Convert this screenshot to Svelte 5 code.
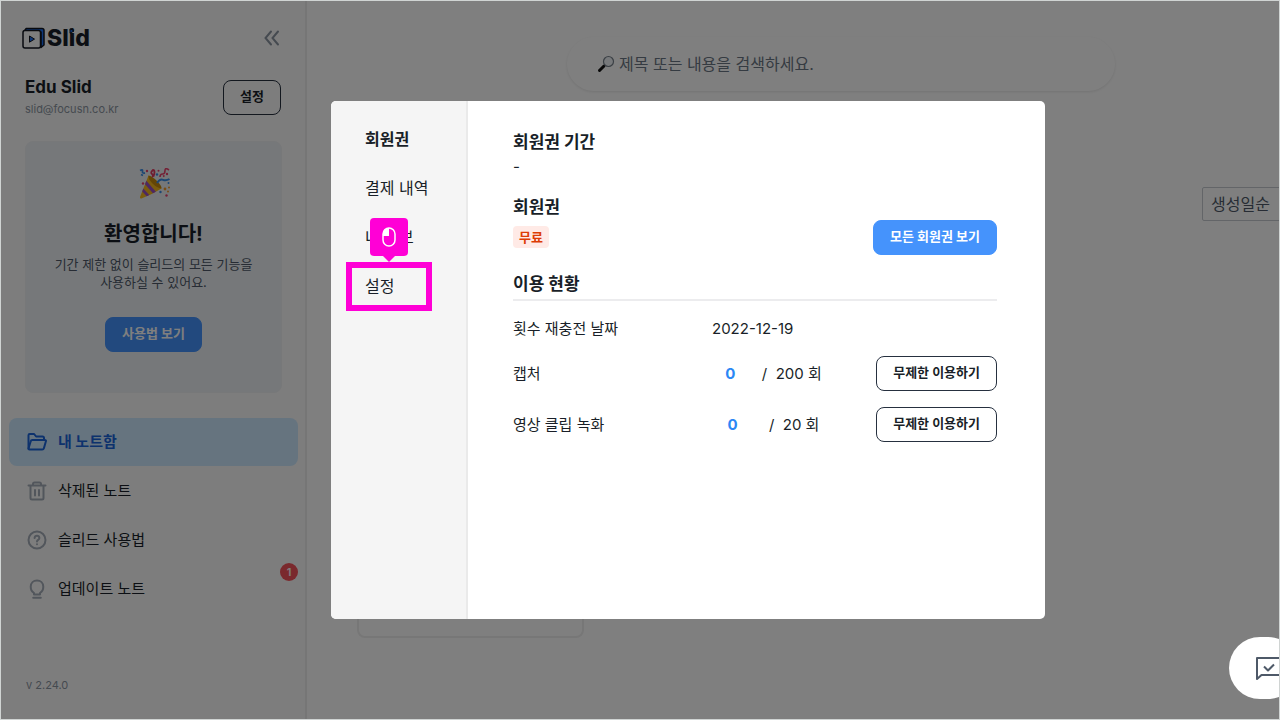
<script>
  let { user = { name: 'Edu Slid', email: 'slid@focusn.co.kr' } } = $props();

  const menu = [
    { icon: 'folder', label: '내 노트함' },
    { icon: 'trash', label: '삭제된 노트' },
    { icon: 'help', label: '슬리드 사용법' },
    { icon: 'bulb', label: '업데이트 노트', badge: 1 },
  ];
  const tabs = ['회원권', '결제 내역', '내 정보', '설정'];
  const usage = [
    { label: '캡처', used: 0, limit: 200 },
    { label: '영상 클립 녹화', used: 0, limit: 20 },
  ];

  let activeMenu = $state('내 노트함');
  let activeTab = $state('회원권');
  let keyword = $state('');
</script>

{#snippet icon(name)}
  <svg class="icon" viewBox="0 0 20 20" width="20" height="20" aria-hidden="true">
    {#if name === 'folder'}
      <path d="M1.5 16.500V3.200q0-1.200 1.200-1.200h4.400l2 2.500h6.400q1.500 0 1.500 1.500v2" />
      <path d="M5.300 8h12.500q1.500 0 1.100 1.300l-2 6.900q-.4 1.300-1.700 1.300H2.500q-1.300 0-.9-1.300l2.100-7q.3-1.200 1.600-1.200z" />
    {:else if name === 'trash'}
      <path d="M1.500 4.500h17M6 4.500V3q0-1.500 1.500-1.500h5Q14 1.500 14 3v1.500M3.500 4.500V17q0 1.500 1.500 1.500h10q1.500 0 1.500-1.500V4.500M8 9v5.500M12 9v5.500" />
    {:else if name === 'help'}
      <circle cx="10" cy="10" r="8.500" />
      <path d="M7.600 8q.2-2.200 2.400-2.200T12.400 8q0 1.200-1.300 2-1.100.6-1.100 1.500" />
      <circle class="dot" cx="10" cy="14.200" r="1" />
    {:else if name === 'bulb'}
      <path d="M7 15.500V14Q3.700 12 3.700 7.800C3.700 4 6.500 1.500 10 1.500s6.300 2.500 6.300 6.300q0 4.200-3.300 6.200v1.500zM6.200 18.800h7.600" />
    {/if}
  </svg>
{/snippet}

<div class="app">
  <aside class="sidebar">
    <div class="brand">
      <a class="logo" href="/" aria-label="Slid">
        <svg viewBox="0 0 24 22" width="24" height="22" aria-hidden="true">
          <path d="M2 4.500 4.200 1.500H20q2 0 2 2V18l-3 2.500V5z" fill="#1b6ff2" stroke="#10151f" stroke-width="1.500" stroke-linejoin="round" />
          <rect x="1" y="3.500" width="17.500" height="17.500" rx="2" fill="#fbfbfb" stroke="#10151f" stroke-width="1.500" />
          <path d="M7.500 9v6.200l5-3.100z" fill="#1b6ff2" stroke="#10151f" stroke-linejoin="round" />
        </svg>
        <span class="wordmark">
          Slid
          <svg viewBox="0 0 6 6" width="6" height="6" aria-hidden="true"><path d="M1 .8v4.400L5 3z" fill="#1b6ff2" stroke="#10151f" /></svg>
        </span>
      </a>
      <button type="button" class="collapse" aria-label="사이드바 접기">
        <svg viewBox="0 0 16 16" width="16" height="16" aria-hidden="true"><path d="M7 1.500 1.500 8 7 14.500M14 1.500 8.500 8l5.500 6.500" /></svg>
      </button>
    </div>

    <div class="profile">
      <div>
        <p class="name">{user.name}</p>
        <p class="email">{user.email}</p>
      </div>
      <button type="button" class="btn outline">설정</button>
    </div>

    <section class="welcome">
      <svg class="popper" viewBox="0 0 32 32" width="32" height="32" aria-hidden="true">
        <path d="M10.500 7.500 23.500 20.500Q14 26.500 3.500 30.500q-2 .2-1.500-1.500z" fill="#f6b91d" />
        <path d="M10.500 7.500Q14 8 19 13t4.500 7.500Q19 20 14.500 15.500T10.500 7.500z" fill="#c98a0c" />
        <path d="m8.300 12.800 9.600 11-3 1.500L7 16.200zM5.300 20.500l6 6.500-2.600 1.200-4.500-4.800z" fill="#9a51c4" />
        <path d="M19 15q3-4.500 6-3.200t6.500-.8" fill="none" stroke="#3b8ee6" stroke-width="2" />
        <path d="M14 9q2-1.500 0-3t1-4q1.500 0 1.500 2t-1 4.500" fill="none" stroke="#e03a60" stroke-width="1.800" />
        <path d="M2 2.500q3-1.500 2.500.8T7 5M3 6.500l2 1" fill="none" stroke="#3b8ee6" stroke-width="1.800" />
        <path d="M22 9q0-3 2.500-3T27 2.500t4-.5M25 8.500l1.500-1" fill="none" stroke="#e8436d" stroke-width="1.600" />
        <g fill="#e8436d"><circle cx="5" cy="15.500" r="1.200" /><circle cx="9" cy="3" r="1.200" /><circle cx="29" cy="6" r="1.200" /><circle cx="28.500" cy="27.500" r="1.200" /><circle cx="20.500" cy="2.800" r="1" /></g>
        <g fill="#f39a2d"><circle cx="27" cy="21" r="1.400" /><circle cx="31" cy="19.500" r="1" /><circle cx="30" cy="23.500" r="1" /></g>
        <g fill="#3b8ee6"><circle cx="22.500" cy="24" r="1.200" /><circle cx="19" cy="6.500" r="1.200" /><circle cx="30.500" cy="15" r="1" /></g>
      </svg>
      <h2>환영합니다!</h2>
      <p>기간 제한 없이 슬리드의 모든 기능을<br />사용하실 수 있어요.</p>
      <button type="button" class="btn primary">사용법 보기</button>
    </section>

    <nav class="menu">
      {#each menu as item}
        <a href="#menu" class:active={activeMenu === item.label} onclick={() => (activeMenu = item.label)}>
          {@render icon(item.icon)}
          {item.label}
          {#if item.badge}<span class="count">{item.badge}</span>{/if}
        </a>
      {/each}
    </nav>

    <p class="version">v 2.24.0</p>
  </aside>

  <main>
    <label class="search">
      <svg viewBox="0 0 18 18" width="18" height="18" aria-hidden="true">
        <path d="m2.500 15.500 4.500-4.500" stroke="#111" stroke-width="3" stroke-linecap="round" />
        <circle cx="11.500" cy="6.500" r="5" fill="#eef3f7" stroke="#77818b" stroke-width="1.200" />
      </svg>
      <input type="text" placeholder="제목 또는 내용을 검색하세요." aria-label="노트 검색" bind:value={keyword} />
    </label>
    <select class="sort" aria-label="정렬">
      <option>생성일순</option>
    </select>
    <div class="notes">
      <article class="note"></article>
    </div>
  </main>

  <div class="overlay">
    <div class="modal" role="dialog" aria-modal="true" aria-label="회원권">
      <nav class="tabs">
        {#each tabs as tab}
          <div class="tab">
            <button type="button" class:active={activeTab === tab} onclick={() => (activeTab = tab)}>{tab}</button>
            {#if tab === '설정'}
              <!-- guide marker: click here -->
              <div class="guide">
                <div class="pointer">
                  <svg viewBox="0 0 14 20" width="14" height="20" aria-hidden="true">
                    <rect x="1" y="1" width="12" height="18" rx="6" fill="none" stroke="#fff" stroke-width="1.500" />
                    <path d="M7 1v8H1V7q0-6 6-6z" fill="#fff" />
                  </svg>
                </div>
              </div>
            {/if}
          </div>
        {/each}
      </nav>

      <div class="content">
        <h3>회원권 기간</h3>
        <p class="period">-</p>
        <div class="plan">
          <div>
            <h3>회원권</h3>
            <span class="free">무료</span>
          </div>
          <button type="button" class="btn primary">모든 회원권 보기</button>
        </div>
        <h3 class="usage-title">이용 현황</h3>
        <table>
          <tbody>
            <tr class="date">
              <th scope="row">횟수 재충전 날짜</th>
              <td>2022-12-19</td>
              <td></td>
            </tr>
            {#each usage as row}
              <tr>
                <th scope="row">{row.label}</th>
                <td>
                  <div class="quota"><strong>{row.used}</strong><span>/&nbsp;&nbsp;{row.limit} 회</span></div>
                </td>
                <td class="action"><button type="button" class="btn outline">무제한 이용하기</button></td>
              </tr>
            {/each}
          </tbody>
        </table>
      </div>
    </div>
  </div>

  <button type="button" class="chat" aria-label="문의하기">
    <svg viewBox="0 0 30 26" width="30" height="26" aria-hidden="true">
      <path d="M2 24V3h26v17H6.500zM9 11.500l4 4 6-6" />
    </svg>
  </button>
</div>

<style>
  :global(body) { margin: 0; }
  .app {
    position: relative; box-sizing: border-box; min-height: 100vh; overflow: hidden;
    display: grid; grid-template-columns: 306px 1fr; border: 1px solid #d0d4d3;
    background: #fff; color: #191f28;
    font-family: Inter, "Noto Sans CJK KR", sans-serif; font-size: 15px; line-height: 24px;
  }
  .app * { box-sizing: border-box; }
  h2, h3, p { margin: 0; }
  button, input, select { font: inherit; color: inherit; }
  a { color: inherit; text-decoration: none; }
  svg { display: block; flex: none; }

  .btn {
    height: 35px; padding: 0 16px 3px; border: 1px solid #26303f; border-radius: 8px;
    background: transparent; font-size: 13px; font-weight: 700; line-height: 20px; white-space: nowrap; cursor: pointer;
  }
  .btn.primary { background: #4593fc; border-color: #4593fc; color: #fff; }

  .sidebar {
    display: flex; flex-direction: column; padding: 25px 7px 20px 8px;
    background: #fbfbfb; border-right: 2px solid #ededed;
  }
  .brand { display: flex; justify-content: space-between; align-items: center; padding: 0 18px 0 13px; }
  .logo { display: flex; align-items: center; gap: 1px; font-size: 23px; font-weight: 800; }
  .wordmark { position: relative; }
  .wordmark svg { position: absolute; top: 2px; left: 22px; }
  .collapse { padding: 0; border: 0; background: none; }
  .collapse path { fill: none; stroke: #8b95a1; stroke-width: 2; stroke-linecap: round; }

  .profile { display: flex; justify-content: space-between; align-items: center; margin-top: 25px; padding: 0 17px 0 16px; }
  .name { font-size: 17px; font-weight: 700; line-height: 24px; }
  .email { font-size: 11px; line-height: 20px; color: #8b95a1; }

  .welcome {
    display: flex; flex-direction: column; align-items: center; margin: 22px 16px 0;
    padding: 26px 16px 40px; border: 1px solid #eef0f3; border-radius: 8px; background: #edf1f5; text-align: center;
  }
  .welcome h2 { margin-top: 18px; font-size: 20px; font-weight: 700; line-height: 32px; }
  .welcome p { margin-top: 5px; font-size: 13px; line-height: 18px; color: #4e5968; }
  .welcome .btn { margin-top: 26px; }

  .menu { display: flex; flex-direction: column; gap: 1px; margin-top: 25px; }
  .menu a { position: relative; display: flex; align-items: center; gap: 11px; height: 48px; padding: 0 18px; border-radius: 8px; }
  .icon { fill: none; stroke: #a4adb8; stroke-width: 2; stroke-linejoin: round; stroke-linecap: round; }
  .icon .dot { fill: #a4adb8; stroke: none; }
  .menu a.active { background: #cce9ff; color: #1b64da; font-weight: 700; }
  .menu a.active .icon { stroke: #1b64da; }
  .count {
    position: absolute; top: -2px; right: 0; width: 18px; height: 18px; border-radius: 50%;
    background: #f5525a; color: #fff; font-size: 11px; font-weight: 600; line-height: 18px; text-align: center;
  }
  .version { margin-top: auto; padding-left: 17px; font-size: 11px; line-height: 28px; color: #8b95a1; }

  main { display: flex; flex-direction: column; min-width: 1068px; padding: 36px 50px 81px; }
  .search {
    display: flex; align-items: center; align-self: center; gap: 4px; width: 548px; height: 54px; padding: 0 30px;
    border-radius: 27px; box-shadow: 0 1px 3px rgba(0, 0, 0, 0.1); font-size: 16px;
  }
  .search input { flex: 1; padding: 0; border: 0; outline: 0; background: none; }
  .search input::placeholder { color: #6b7684; opacity: 1; }
  .sort {
    appearance: none; align-self: flex-end; width: 123px; height: 34px; margin-top: 96px; padding: 0 8px;
    border: 1px solid #c6cbd1; border-radius: 2px; background: #fff; color: #4e5968; font-size: 16px;
  }
  .notes { flex: 1; display: grid; grid-template-columns: repeat(4, 1fr); gap: 20px; margin-top: 32px; }
  .note { border: 2px solid #eee; border-radius: 8px; }

  .overlay {
    position: absolute; inset: 0; display: grid; place-items: center;
    padding-left: 96px; background: rgba(0, 0, 0, 0.5);
  }
  .modal {
    display: grid; grid-template-columns: 137px 1fr; width: min(714px, 90%); min-height: 518px;
    border-radius: 5px; overflow: hidden; background: #fff;
  }
  .tabs { padding: 14px 15px; background: #f5f5f5; border-right: 2px solid #eaeaea; }
  .tab { position: relative; width: 86px; height: 49px; }
  .tab button { height: 100%; padding: 0 0 2px 19px; border: 0; background: none; font-size: 16px; white-space: nowrap; }
  .tab button.active { font-weight: 700; }
  .guide { position: absolute; inset: 0; border: 6px solid #ff00d6; pointer-events: none; }
  .pointer {
    position: absolute; left: 18px; bottom: 49px; display: grid; place-items: center;
    width: 38px; height: 38px; border-radius: 4px; background: #ff00d6;
  }
  .pointer::after {
    content: ''; position: absolute; top: 100%; left: 13px;
    border: 6px solid transparent; border-top-color: #ff00d6; border-bottom: 0;
  }

  .content { padding: 28px 48px 32px 45px; }
  h3 { font-size: 17px; font-weight: 700; line-height: 26px; }
  .plan { display: flex; justify-content: space-between; align-items: flex-end; height: 61px; margin-top: 15px; }
  .plan > div { height: 100%; }
  .free {
    display: block; width: 36px; margin-top: 6px; border-radius: 4px; background: #ffeae6;
    color: #dd3c04; font-size: 13px; font-weight: 700; line-height: 22px; text-align: center;
  }
  .usage-title { margin-top: 16px; padding-bottom: 2px; border-bottom: 2px solid #ececee; }
  table { width: 100%; border-collapse: collapse; table-layout: fixed; }
  th, td { height: 51px; padding: 0; text-align: left; font-weight: 400; }
  th { width: 199px; }
  td:nth-child(2) { width: 123px; }
  .date th, .date td { height: 47px; padding-top: 9px; }
  .quota { display: flex; justify-content: space-around; }
  .quota strong { color: #2b87f5; font-weight: 700; }
  .action { text-align: right; }

  .chat {
    position: absolute; right: -20px; bottom: 20px; display: flex; align-items: center;
    width: 70px; height: 62px; padding: 0 26px; border: 0; border-radius: 31px; background: #fff;
  }
  .chat path { fill: none; stroke: #4e5968; stroke-width: 2; stroke-linejoin: round; }
</style>
